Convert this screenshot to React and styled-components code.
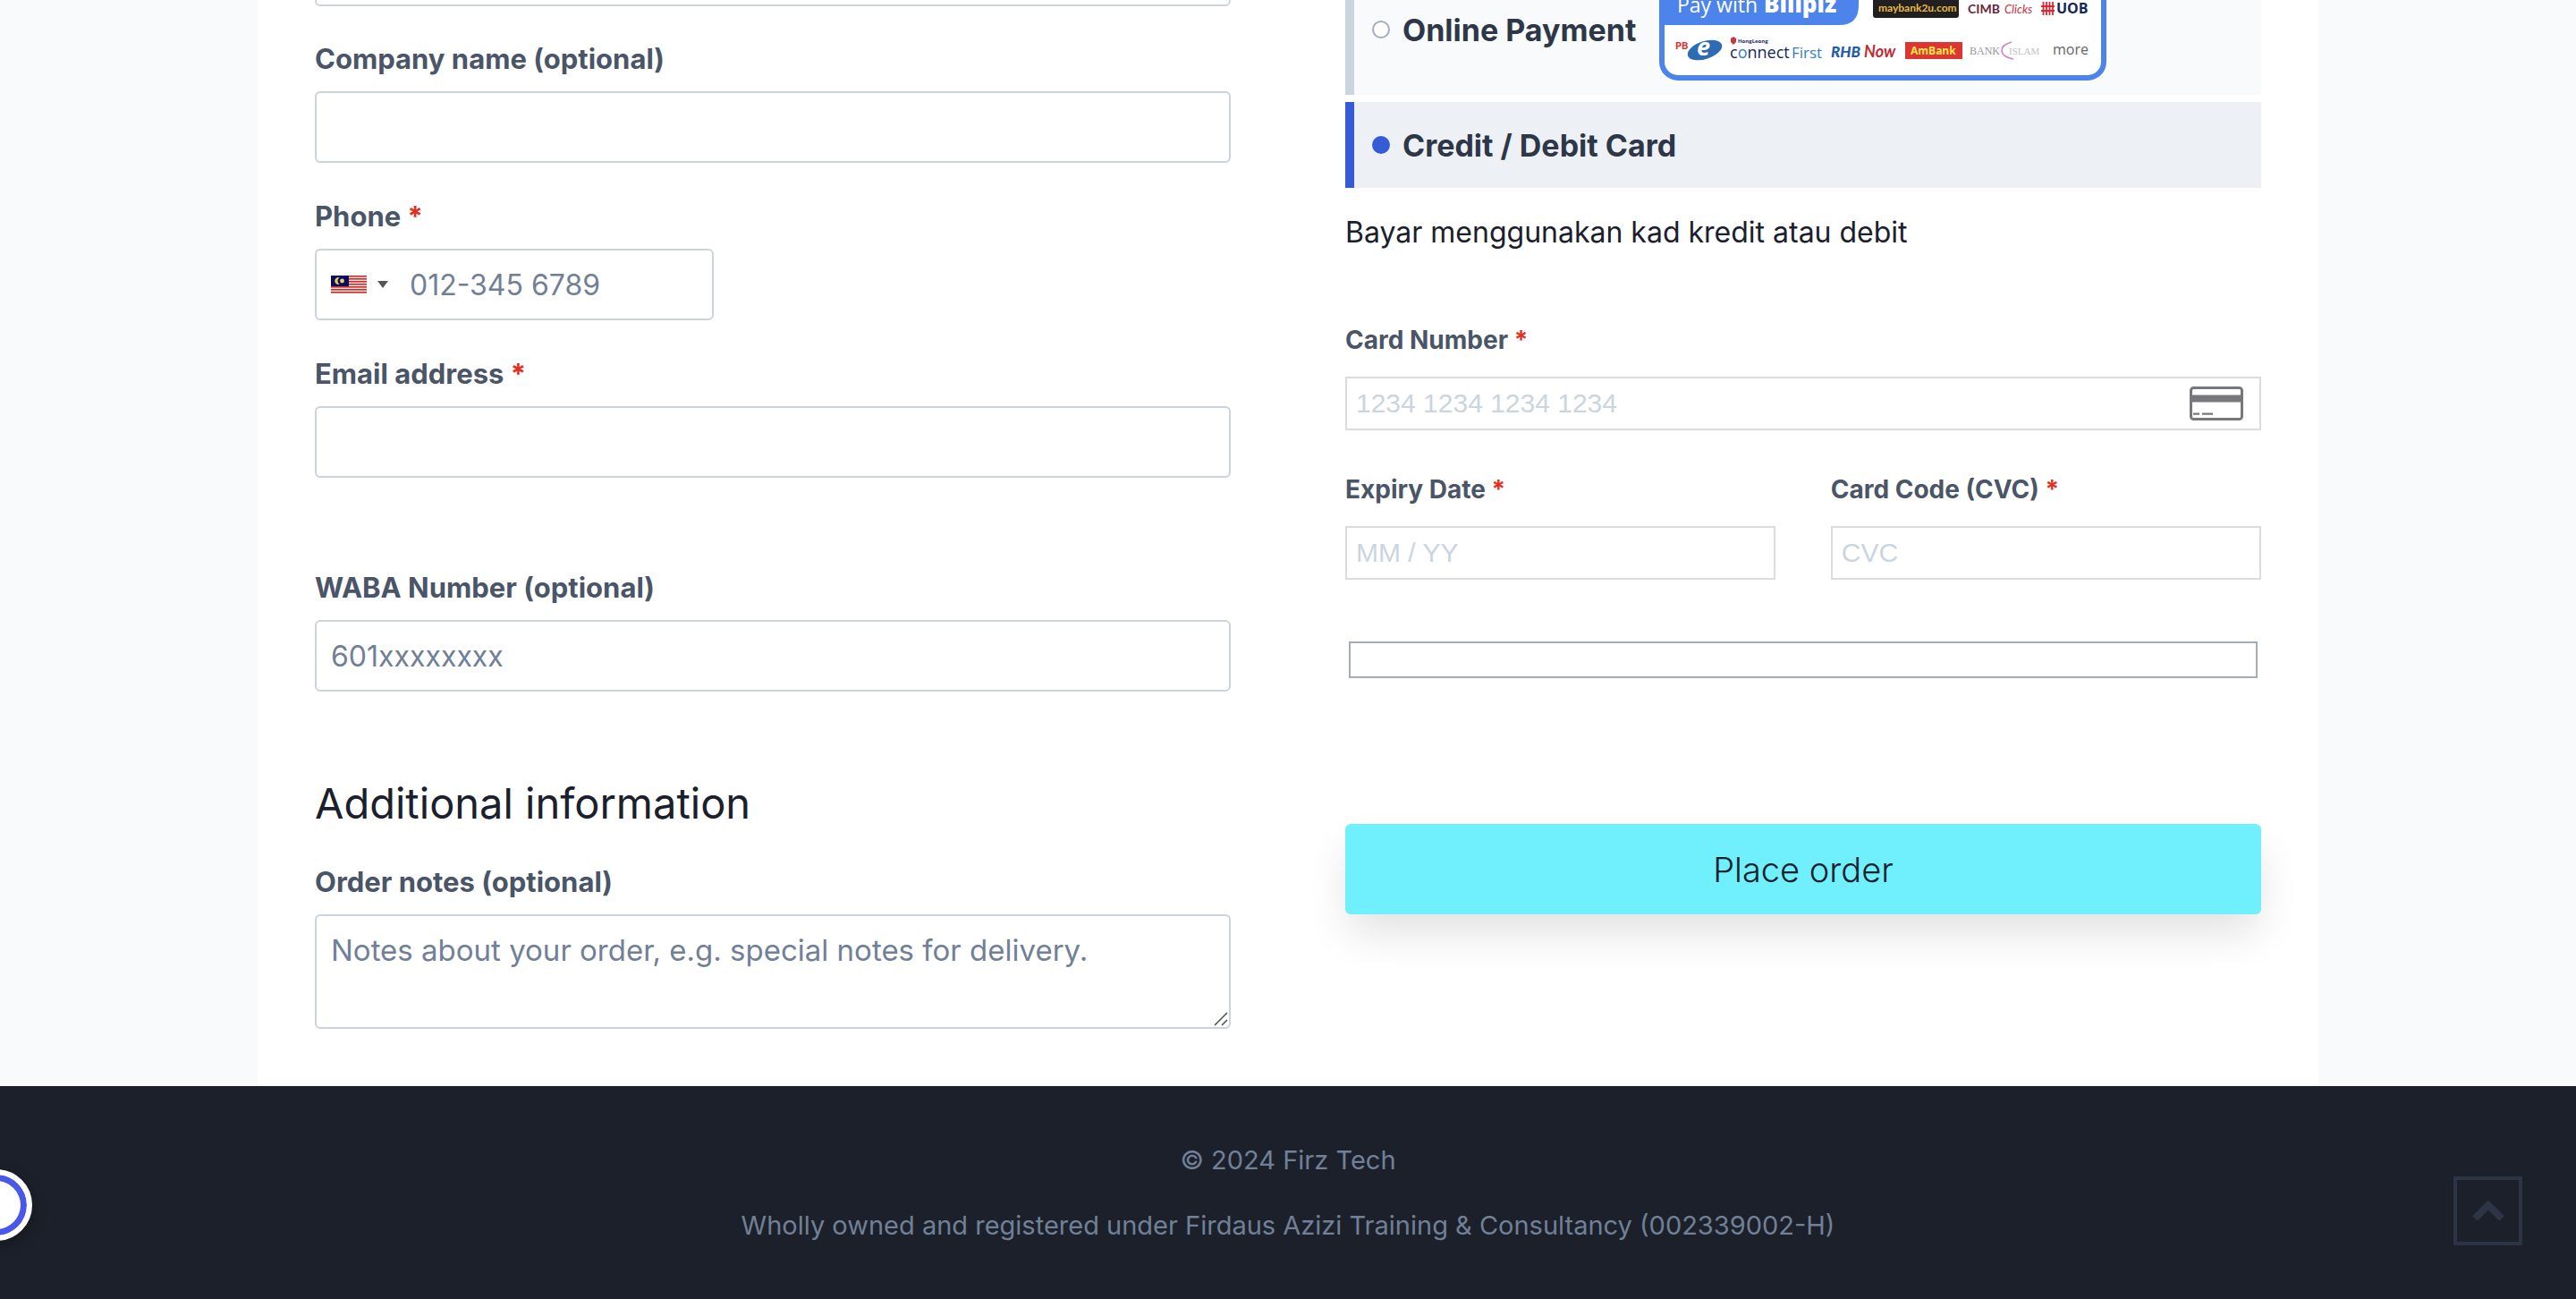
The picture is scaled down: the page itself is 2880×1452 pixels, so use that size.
import React from "react";
import styled, { createGlobalStyle } from "styled-components";

const GlobalStyle = createGlobalStyle`
  * {
    box-sizing: border-box;
  }
  body {
    margin: 0;
    background: #f8fafc;
    color: #1a202c;
    font-family: Inter, "Open Sans", sans-serif;
  }
`;

const Page = styled.div`
  position: relative;
  overflow: hidden;
`;

/* the form is scrolled, its first row starts above the window */
const Checkout = styled.form`
  display: grid;
  grid-template-columns: 1fr 1fr;
  column-gap: 128px;
  width: 80%;
  margin: -73px auto 0;
  padding: 0 64px 64px;
  background: #fff;
`;

const Column = styled.div`
  display: flex;
  flex-direction: column;
  min-width: 0;
`;

const Field = styled.div`
  display: flex;
  flex-direction: column;
  margin-bottom: ${props => props.$gap || 20}px;
  &:last-child {
    margin-bottom: 0;
  }
`;

const Label = styled.label`
  padding: 15px 0 11px;
  font-size: 31px;
  line-height: 50px;
  font-weight: 700;
  color: #4a5568;
`;

const Required = styled.span`
  color: #e53020;
`;

const Input = styled.input`
  width: 100%;
  height: 80px;
  padding: 0 16px;
  border: 2px solid #cdd3da;
  border-radius: 6px;
  background: #fff;
  font-family: inherit;
  font-size: 32px;
  color: #1a202c;
  &::placeholder {
    color: #718096;
    opacity: 1;
  }
`;

const NotesBox = styled.div`
  position: relative;
`;

const TextArea = styled(Input)`
  display: block;
  height: 128px;
  padding: 14px 16px;
  font-size: 33px;
  line-height: 48px;
  resize: vertical;
  &::-webkit-resizer {
    background: transparent;
  }
`;

const Grip = styled.svg`
  position: absolute;
  right: 3px;
  bottom: 3px;
  pointer-events: none;
`;

const PhoneBox = styled.div`
  display: flex;
  width: 446px;
  height: 80px;
  border: 2px solid #cdd3da;
  border-radius: 6px;
`;

const Country = styled.button`
  display: flex;
  align-items: center;
  gap: 12px;
  padding: 0 12px 0 16px;
  border: none;
  background: none;
`;

const PhoneInput = styled(Input)`
  height: 100%;
  padding: 0 12px;
  border: none;
`;

const Title = styled.h3`
  margin: 40px 0 16px;
  font-size: 47px;
  line-height: 64px;
  font-weight: 400;
`;

const Methods = styled.div`
  display: flex;
  flex-direction: column;
  gap: 8px;
  padding-top: 33px;
`;

const Method = styled.label`
  display: flex;
  align-items: center;
  min-height: 96px;
  padding: 16px 20px;
  border-left: 10px solid ${props => (props.$active ? '#355cd6' : '#cbd5e0')};
  background: ${props => (props.$active ? '#edf1f6' : '#f8fafc')};
  font-size: 34px;
  font-weight: 700;
  color: #2d3748;
`;

const Radio = styled.input`
  appearance: none;
  flex: none;
  width: 20px;
  height: 20px;
  margin: 0 14px 0 0;
  border: 2px solid #a0aec0;
  border-radius: 50%;
  background: #fff;
  &:checked {
    border-color: #355cd6;
    background: #355cd6;
  }
`;

const Banks = styled.svg`
  flex: none;
  width: 500px;
  height: 114px;
  margin-left: 26px;
  font-family: "Open Sans", sans-serif;
  font-weight: 400;
`;

const Note = styled.p`
  margin: 28px 0 73px;
  font-size: 32px;
  line-height: 44px;
`;

const CardLabel = styled(Label)`
  padding: 0 0 16px;
  font-size: 28px;
`;

const CardFields = styled.div`
  display: flex;
  justify-content: space-between;
`;

const CardField = styled.div`
  display: flex;
  flex-direction: column;
  width: ${props => (props.$half ? '47%' : '100%')};
  margin-bottom: 41px;
`;

const CardBox = styled.div`
  display: flex;
  align-items: center;
  height: 60px;
  padding-right: 18px;
  border: 2px solid #dcdcdc;
`;

const CardInput = styled.input`
  flex: 1;
  min-width: 0;
  padding: 0 10px;
  border: none;
  background: none;
  font-family: "Liberation Sans", sans-serif;
  font-size: 30px;
  &::placeholder {
    color: #cbd5e0;
    opacity: 1;
  }
`;

const EmptySet = styled.fieldset`
  height: 41px;
  margin: 28px 4px 0;
  padding: 0;
  border: 2px solid #a5abbb;
`;

const OrderButton = styled.button`
  height: 101px;
  margin-top: 163px;
  border: none;
  border-radius: 6px;
  background: #70f0fd;
  box-shadow: 0 24px 48px -4px rgba(0, 0, 0, 0.12);
  font-family: inherit;
  font-size: 38px;
  font-weight: 300;
  color: #1a202c;
`;

const Footer = styled.footer`
  display: flex;
  flex-direction: column;
  align-items: center;
  gap: 28px;
  padding: 60px 0;
  background: #1c202a;
  font-size: 29px;
  line-height: 45px;
  color: #718096;
  p {
    margin: 0;
  }
`;

const BackToTop = styled.a`
  position: absolute;
  right: 60px;
  bottom: 60px;
  display: flex;
  align-items: center;
  justify-content: center;
  width: 77px;
  height: 77px;
  border: 4px solid #2d3445;
`;

const Bubble = styled.button`
  position: absolute;
  left: -44px;
  bottom: 65px;
  width: 80px;
  height: 80px;
  padding: 0;
  border: 6px solid #fff;
  border-radius: 50%;
  background: #fff;
  box-shadow: inset 0 0 0 7px #4a58ea, 0 4px 16px rgba(0, 0, 0, 0.3);
`;

const Flag = () => (
  <svg width="40" height="20" viewBox="0 0 40 20">
    <rect width="40" height="20" fill="#f6e4e2" />
    {[0, 3, 6, 9, 12, 15, 18].map(y => (
      <rect key={y} y={y} width="40" height="1.6" fill="#c9302c" />
    ))}
    <rect width="20" height="12" fill="#0c0c5c" />
    <path d="M9.5 2.2a4 4 0 1 0 0 7.6a4.6 4.6 0 0 1 0-7.6z" fill="#e8c860" />
    <circle cx="12.5" cy="6" r="2.4" fill="#f0cf70" />
  </svg>
);

const Caret = () => (
  <svg width="12" height="8" viewBox="0 0 12 8">
    <path d="M0 0h12L6 8z" fill="#555" />
  </svg>
);

const CardIcon = () => (
  <svg width="60" height="38" viewBox="0 0 60 38">
    <rect x="1.5" y="1.5" width="57" height="35" rx="3" fill="none" stroke="#77787b" strokeWidth="3" />
    <path d="M1 9.5h58v8H1zM4 29.5h7v2.2H4zM14 29.5h12v2.2H14z" fill="#77787b" />
  </svg>
);

const BankLogos = () => (
  <Banks viewBox="0 0 500 114">
    <rect x="3" y="3" width="494" height="108" rx="18" fill="#fff" stroke="#4c84ec" strokeWidth="6" />
    <path d="M2 20Q2 2 20 2H223V30Q223 52 201 52H2z" fill="#4c84ec" />
    <text x="20" y="38" fontSize="23" fill="#fff">Pay with</text>
    <text x="117" y="38" fontSize="26" fontWeight="800" fill="#fff">Billplz</text>
    <rect x="239" y="10" width="96" height="34" rx="3" fill="#221f20" />
    <text x="245" y="37" fontFamily="Lato" fontSize="12" fontWeight="700" fill="#e8bb3e">maybank2u.com</text>
    <text x="345" y="39" fontFamily="Lato" fontSize="14" fontWeight="700" fill="#6e2437">CIMB</text>
    <text x="386" y="39" fontFamily="Lato" fontSize="13" fontStyle="italic" fill="#cf2e3c">Clicks</text>
    <path d="M429.5 26v15M433 26v15M436.500 26v15M440 26v15M427 31h15M427 36h15" stroke="#dc2833" strokeWidth="1.8" />
    <text x="444" y="39" fontSize="16" fontWeight="700" fill="#13275a">UOB</text>
    <ellipse cx="51" cy="80" rx="20" ry="10" fill="#2d6cb5" transform="rotate(-18 51 80)" />
    <text x="18" y="79" fontFamily="Lato" fontSize="11" fontWeight="900" fill="#d8322f">PB</text>
    <text x="42" y="86" fontSize="27" fontWeight="700" fontStyle="italic" fill="#fff">e</text>
    <path d="M83 65l3 2v4l-3 3l-3-3v-4z" fill="#c8363e" />
    <text x="88" y="72" fontSize="6" fontWeight="700" fill="#1f2c5c">HongLeong</text>
    <text x="79" y="89" fontSize="18" fill="#13275a">
      c<tspan fill="#2f80c3">o</tspan>nnect
    </text>
    <text x="148" y="89" fontSize="17" fill="#2f80c3">First</text>
    <text x="192" y="88" fontFamily="Lato" fontSize="17" fontWeight="900" fontStyle="italic" fill="#245ca8">RHB</text>
    <text x="229" y="88" fontFamily="Lato" fontSize="18" fontWeight="700" fontStyle="italic" fill="#c12a34">Now</text>
    <rect x="275" y="71" width="64" height="19" fill="#dd3632" />
    <text x="281" y="85" fontSize="12" fontWeight="700" fill="#ffe84a">AmBank</text>
    <text x="347" y="85" fontFamily="Liberation Serif" fontSize="12" fill="#96969b">BANK</text>
    <path d="M394 71C379 75 379 87 396 90" fill="none" stroke="#d482bb" strokeWidth="1.6" />
    <text x="391" y="85" fontFamily="Liberation Serif" fontSize="11" fill="#c2c2c6">ISLAM</text>
    <text x="440" y="85" fontSize="16" fill="#66666b">more</text>
  </Banks>
);

const App = () => (
  <>
    <GlobalStyle />
    <Page>
      <Checkout>
        <Column>
          <Field $gap={19}>
            <Input aria-label="Last name" />
          </Field>
          <Field>
            <Label htmlFor="company">Company name (optional)</Label>
            <Input id="company" />
          </Field>
          <Field>
            <Label htmlFor="phone">Phone <Required>*</Required></Label>
            <PhoneBox>
              <Country type="button" aria-label="Malaysia">
                <Flag />
                <Caret />
              </Country>
              <PhoneInput id="phone" type="tel" placeholder="012-345 6789" />
            </PhoneBox>
          </Field>
          <Field $gap={83}>
            <Label htmlFor="email">Email address <Required>*</Required></Label>
            <Input id="email" type="email" />
          </Field>
          <Field $gap={53}>
            <Label htmlFor="waba">WABA Number (optional)</Label>
            <Input id="waba" placeholder="601xxxxxxxx" />
          </Field>
          <Title>Additional information</Title>
          <Field>
            <Label htmlFor="notes">Order notes (optional)</Label>
            <NotesBox>
              <TextArea
                as="textarea"
                id="notes"
                placeholder="Notes about your order, e.g. special notes for delivery."
              />
              <Grip width="16" height="16" viewBox="0 0 16 16">
                <path d="M1 15L15 1M9 15l6-6" stroke="#555" strokeWidth="1.6" />
              </Grip>
            </NotesBox>
          </Field>
        </Column>
        <Column>
          <Methods>
            <Method>
              <Radio type="radio" name="payment" />
              Online Payment
              <BankLogos />
            </Method>
            <Method $active>
              <Radio type="radio" name="payment" defaultChecked />
              Credit / Debit Card
            </Method>
          </Methods>
          <Note>Bayar menggunakan kad kredit atau debit</Note>
          <CardField>
            <CardLabel htmlFor="card">Card Number <Required>*</Required></CardLabel>
            <CardBox>
              <CardInput id="card" placeholder="1234 1234 1234 1234" />
              <CardIcon />
            </CardBox>
          </CardField>
          <CardFields>
            <CardField $half>
              <CardLabel htmlFor="expiry">Expiry Date <Required>*</Required></CardLabel>
              <CardBox>
                <CardInput id="expiry" placeholder="MM / YY" />
              </CardBox>
            </CardField>
            <CardField $half>
              <CardLabel htmlFor="cvc">Card Code (CVC) <Required>*</Required></CardLabel>
              <CardBox>
                <CardInput id="cvc" placeholder="CVC" />
              </CardBox>
            </CardField>
          </CardFields>
          <EmptySet />
          <OrderButton type="button">Place order</OrderButton>
        </Column>
      </Checkout>
      <Footer>
        <p>© 2024 Firz Tech</p>
        <p>Wholly owned and registered under Firdaus Azizi Training &amp; Consultancy (002339002-H)</p>
      </Footer>
      <Bubble type="button" aria-label="Open chat" />
      <BackToTop href="#" aria-label="Back to top">
        <svg width="36" height="24" viewBox="0 0 36 24">
          <path d="M3 20L18 5l15 15" fill="none" stroke="#2d3445" strokeWidth="8" />
        </svg>
      </BackToTop>
    </Page>
  </>
);

export default App;
